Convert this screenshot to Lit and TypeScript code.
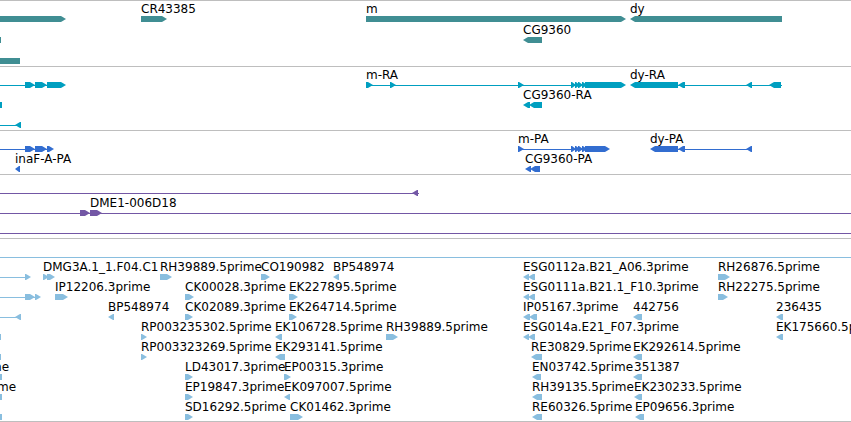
import { LitElement, html, svg, css } from "lit";
import { customElement, property } from "lit/decorators.js";

/** Number of units across the visible region. */
const SPAN = 851;

/** "r" and "l" are strand arrows, "b" is a block cut by the edge, "-" an intron line. */
type Kind = "r" | "l" | "b" | "-";
type Shape = [Kind, number, number];
type Label = [number, string];
interface Row {
  shapes: Shape[];
  labels?: Label[];
}
interface Track {
  name: string;
  title: string;
  rows: Row[];
}

const TRACKS: Track[] = [
  {
    name: "gene",
    title: "Genes",
    rows: [
      {
        shapes: [["r", -20, 66], ["r", 141, 167], ["r", 366, 626], ["l", 630, 782]],
        labels: [[141, "CR43385"], [366, "m"], [630, "dy"]],
      },
      { shapes: [["b", 0, 1], ["l", 523, 542]], labels: [[523, "CG9360"]] },
      { shapes: [["b", 0, 20]] },
    ],
  },
  {
    name: "transcript",
    title: "Transcripts",
    rows: [
      {
        shapes: [
          ["-", 0, 62], ["r", 25, 35], ["r", 35, 47], ["r", 47, 66],
          ["-", 366, 622], ["r", 366, 373], ["r", 390, 396], ["r", 518, 524],
          ["r", 571, 576], ["r", 575, 580], ["r", 578, 583], ["r", 582, 587], ["r", 585, 626],
          ["-", 634, 782], ["l", 630, 678], ["l", 678, 685], ["l", 746, 752], ["l", 769, 781],
        ],
        labels: [[366, "m-RA"], [630, "dy-RA"]],
      },
      { shapes: [["b", 0, 2], ["l", 523, 530], ["l", 529, 542]], labels: [[523, "CG9360-RA"]] },
      { shapes: [["-", 0, 20], ["l", 15, 21]] },
    ],
  },
  {
    name: "protein",
    title: "Polypeptides",
    rows: [
      {
        shapes: [
          ["-", 0, 50], ["r", 25, 35], ["r", 35, 47], ["r", 47, 54],
          ["-", 518, 606], ["r", 518, 524],
          ["r", 571, 576], ["r", 575, 580], ["r", 578, 583], ["r", 582, 587], ["r", 585, 610],
          ["-", 654, 752], ["l", 650, 678], ["l", 678, 685], ["l", 746, 752],
        ],
        labels: [[518, "m-PA"], [650, "dy-PA"]],
      },
      {
        shapes: [["l", 15, 20], ["l", 525, 531], ["l", 530, 540]],
        labels: [[15, "inaF-A-PA"], [525, "CG9360-PA"]],
      },
    ],
  },
  {
    name: "match",
    title: "Similarity",
    rows: [
      { shapes: [["-", 0, 419], ["l", 412, 418]] },
      { shapes: [["-", 0, 851], ["r", 80, 90], ["r", 90, 102]], labels: [[90, "DME1-006D18"]] },
      { shapes: [["-", 0, 851]] },
    ],
  },
  {
    name: "est",
    title: "Expressed sequences",
    rows: [
      { shapes: [["-", 0, 851]] },
      {
        shapes: [
          ["-", 0, 28], ["r", 25, 31], ["r", 43, 49], ["r", 47, 55], ["r", 160, 172],
          ["r", 261, 270], ["l", 333, 339], ["l", 523, 529], ["l", 528, 535], ["r", 718, 730],
        ],
        labels: [
          [43, "DMG3A.1_1.F04.C1"], [160, "RH39889.5prime"], [261, "CO190982"],
          [333, "BP548974"], [523, "ESG0112a.B21_A06.3prime"], [718, "RH26876.5prime"],
        ],
      },
      {
        shapes: [
          ["-", 0, 38], ["r", 25, 35], ["r", 35, 41], ["r", 55, 68], ["r", 185, 194],
          ["r", 289, 298], ["l", 523, 529], ["l", 528, 535], ["r", 718, 728],
        ],
        labels: [
          [55, "IP12206.3prime"], [185, "CK00028.3prime"], [289, "EK227895.5prime"],
          [523, "ESG0111a.B21.1_F10.3prime"], [718, "RH22275.5prime"],
        ],
      },
      {
        shapes: [
          ["-", 0, 20], ["l", 15, 21], ["l", 108, 114], ["r", 185, 193], ["r", 289, 297],
          ["l", 523, 530], ["l", 529, 537], ["l", 633, 642], ["l", 776, 783],
        ],
        labels: [
          [108, "BP548974"], [185, "CK02089.3prime"], [289, "EK264714.5prime"],
          [523, "IP05167.3prime"], [633, "442756"], [776, "236435"],
        ],
      },
      {
        shapes: [
          ["b", 0, 1], ["r", 141, 147], ["l", 275, 282], ["r", 386, 398],
          ["l", 523, 529], ["l", 528, 535], ["l", 776, 783],
        ],
        labels: [
          [141, "RP003235302.5prime"], [275, "EK106728.5prime"], [386, "RH39889.5prime"],
          [523, "ESG014a.E21_F07.3prime"], [776, "EK175660.5prime"],
        ],
      },
      {
        shapes: [["b", 0, 1], ["r", 141, 147], ["l", 275, 285], ["l", 531, 542], ["l", 633, 642]],
        labels: [
          [141, "RP003323269.5prime"], [275, "EK293141.5prime"],
          [531, "RE30829.5prime"], [633, "EK292614.5prime"],
        ],
      },
      {
        shapes: [["b", 0, 2], ["r", 185, 193], ["r", 284, 291], ["l", 532, 541], ["l", 633, 642]],
        labels: [
          [-10, "me"], [185, "LD43017.3prime"], [284, "EP00315.3prime"],
          [532, "EN03742.5prime"], [634, "351387"],
        ],
      },
      {
        shapes: [["b", 0, 2], ["r", 185, 193], ["l", 284, 290], ["l", 532, 542], ["l", 634, 642]],
        labels: [
          [-3, "me"], [185, "EP19847.3prime"], [284, "EK097007.5prime"],
          [532, "RH39135.5prime"], [634, "EK230233.5prime"],
        ],
      },
      {
        shapes: [["b", 0, 2], ["r", 185, 193], ["r", 290, 303], ["l", 532, 542], ["l", 635, 644]],
        labels: [
          [185, "SD16292.5prime"], [290, "CK01462.3prime"],
          [532, "RE60326.5prime"], [635, "EP09656.3prime"],
        ],
      },
    ],
  },
];

function outline([kind, from, to]: Shape): string {
  const tip = Math.min(6, to - from);
  switch (kind) {
    case "-":
      return `M${from} 3H${to}V4H${from}Z`;
    case "b":
      return `M${from} 0H${to}V6H${from}Z`;
    case "r":
      return `M${from} 0H${to - tip + 1}L${to} 3L${to - tip + 1} 6H${from}Z`;
    case "l":
      return `M${to} 0H${from + tip - 1}L${from} 3L${from + tip - 1} 6H${to}Z`;
  }
}

@customElement("feature-row")
export class FeatureRow extends LitElement {
  @property({ attribute: false }) row: Row = { shapes: [] };

  static styles = css`
    :host {
      display: block;
      position: relative;
      box-sizing: border-box;
      padding-top: 15px;
    }
    .glyphs {
      display: block;
      width: 100%;
      height: 6px;
      fill: currentColor;
    }
    .label {
      position: absolute;
      top: 0;
      color: #000;
      line-height: 16px;
      white-space: nowrap;
    }
  `;

  render() {
    return html`
      <svg class="glyphs" viewBox="0 0 ${SPAN} 6" preserveAspectRatio="none" aria-hidden="true">
        ${this.row.shapes.map((s) => svg`<path d=${outline(s)}></path>`)}
      </svg>
      ${(this.row.labels ?? []).map(
        ([at, text]) =>
          html`<span class="label" style="left:${(at / SPAN) * 100}%">${text}</span>`
      )}
    `;
  }
}

@customElement("app-root")
export class AppRoot extends LitElement {
  static styles = css`
    :host {
      display: block;
      overflow: hidden;
      background: #fff;
      border-bottom: 1px solid #bebebe;
      font-family: "DejaVu Sans", sans-serif;
      font-size: 12px;
    }
    .track {
      border-top: 1px solid #bebebe;
      padding-bottom: 3px;
    }
    .track feature-row {
      height: 20px;
    }
    .gene {
      color: #408e93;
      padding-bottom: 2px;
    }
    .gene feature-row {
      height: 21px;
    }
    .transcript {
      color: #009fc0;
    }
    .protein {
      color: #326dd0;
    }
    .match {
      color: #7357a5;
    }
    .est {
      color: #89bedf;
      padding-bottom: 2px;
    }
  `;

  render() {
    return html`${TRACKS.map(
      (t) => html`
        <section class="track ${t.name}" aria-label=${t.title}>
          ${t.rows.map((r) => html`<feature-row .row=${r}></feature-row>`)}
        </section>
      `
    )}`;
  }
}
